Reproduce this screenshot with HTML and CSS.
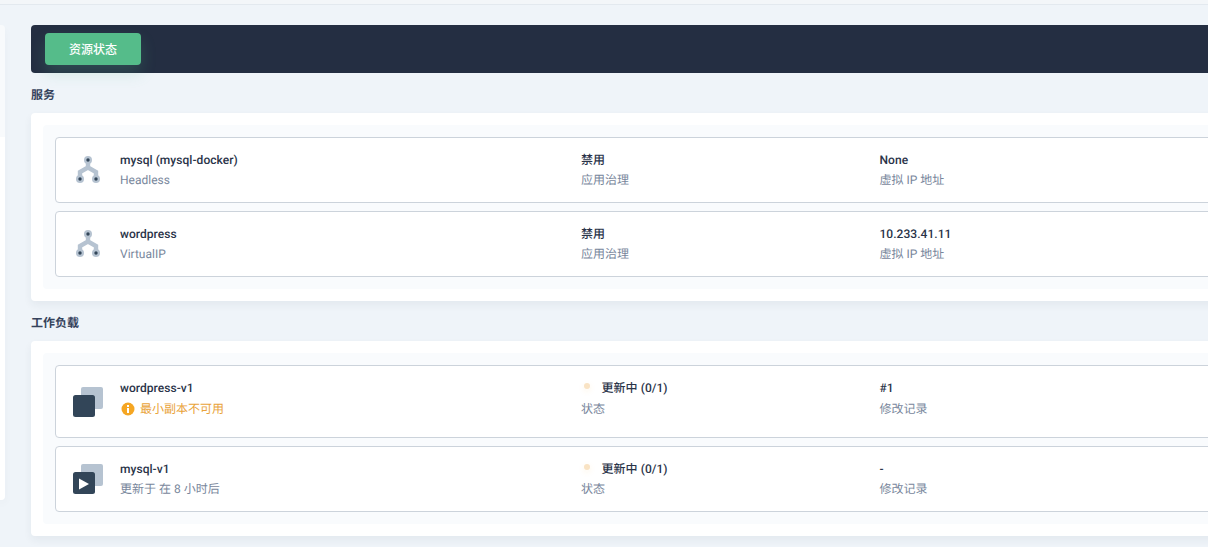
FILE: index.html
```html
<!DOCTYPE html>
<html lang="zh">
<head>
<meta charset="utf-8">
<title>资源状态</title>
<link rel="stylesheet" href="styles.css">
</head>
<body>
<div class="topbar"></div>
<div class="layout">
  <aside class="side">
    <div class="side-top"></div>
    <div class="side-bottom"></div>
  </aside>
  <main class="main">
    <div class="tabbar"><button class="tab">资源状态</button></div>

    <h2 class="heading">服务</h2>
    <section class="card">
      <div class="inner">
        <div class="row">
          <div class="icon-cell">
            <svg class="svc" width="24" height="28" viewBox="0 0 24 28"><path d="M12 4V11.5L4 16V23M12 11.5L20 16V23" fill="none" stroke="#b6c3d1" stroke-width="4.4"/><circle cx="12" cy="4" r="4" fill="#b6c3d1"/><circle cx="4" cy="23" r="4" fill="#b6c3d1"/><circle cx="20" cy="23" r="4" fill="#b6c3d1"/><circle cx="12" cy="4" r="1.7" fill="#324558"/><circle cx="4" cy="23" r="1.7" fill="#324558"/><circle cx="20" cy="23" r="1.7" fill="#324558"/></svg>
          </div>
          <div class="col col-name"><div class="title">mysql (mysql-docker)</div><div class="sub">Headless</div></div>
          <div class="col col-mid"><div class="title">禁用</div><div class="sub">应用治理</div></div>
          <div class="col"><div class="title">None</div><div class="sub">虚拟 IP 地址</div></div>
        </div>
        <div class="row">
          <div class="icon-cell">
            <svg class="svc" width="24" height="28" viewBox="0 0 24 28"><path d="M12 4V11.5L4 16V23M12 11.5L20 16V23" fill="none" stroke="#b6c3d1" stroke-width="4.4"/><circle cx="12" cy="4" r="4" fill="#b6c3d1"/><circle cx="4" cy="23" r="4" fill="#b6c3d1"/><circle cx="20" cy="23" r="4" fill="#b6c3d1"/><circle cx="12" cy="4" r="1.7" fill="#324558"/><circle cx="4" cy="23" r="1.7" fill="#324558"/><circle cx="20" cy="23" r="1.7" fill="#324558"/></svg>
          </div>
          <div class="col col-name"><div class="title">wordpress</div><div class="sub">VirtualIP</div></div>
          <div class="col col-mid"><div class="title">禁用</div><div class="sub">应用治理</div></div>
          <div class="col"><div class="title">10.233.41.11</div><div class="sub">虚拟 IP 地址</div></div>
        </div>
      </div>
    </section>

    <h2 class="heading">工作负载</h2>
    <section class="card">
      <div class="inner">
        <div class="row row-warn">
          <div class="icon-cell">
            <svg class="stack" width="32" height="32" viewBox="0 0 32 32"><rect x="9" y="1" width="22" height="22" rx="2" fill="#b6c3d1"/><rect x="1" y="9" width="22" height="22" rx="2.5" fill="#324558"/></svg>
          </div>
          <div class="col col-name"><div class="title">wordpress-v1</div>
            <div class="warn"><svg width="14" height="14" viewBox="0 0 14 14"><circle cx="7" cy="7" r="6.5" fill="#f5a623"/><rect x="6" y="6" width="2" height="5" fill="#fff"/><rect x="6" y="3" width="2" height="2" fill="#fff"/></svg><span>最小副本不可用</span></div>
          </div>
          <div class="col col-mid"><div class="title status"><i class="dot"></i>更新中 (0/1)</div><div class="sub">状态</div></div>
          <div class="col"><div class="title">#1</div><div class="sub">修改记录</div></div>
        </div>
        <div class="row">
          <div class="icon-cell">
            <svg class="stack" width="32" height="32" viewBox="0 0 32 32"><rect x="9" y="1" width="22" height="22" rx="2" fill="#b6c3d1"/><rect x="1" y="9" width="22" height="22" rx="2.5" fill="#324558"/><path d="M7 15.5L17 21L7 26.5Z" fill="#fff"/></svg>
          </div>
          <div class="col col-name"><div class="title">mysql-v1</div><div class="sub">更新于 在 8 小时后</div></div>
          <div class="col col-mid"><div class="title status"><i class="dot"></i>更新中 (0/1)</div><div class="sub">状态</div></div>
          <div class="col"><div class="title">-</div><div class="sub">修改记录</div></div>
        </div>
      </div>
    </section>
  </main>
</div>
</body>
</html>
```

FILE: styles.css
```css
* { box-sizing: border-box; }
html, body { margin: 0; height: 547px; overflow: hidden; }
body {
  background: #eff4f9;
  font-family: Roboto, "Noto Sans CJK SC", sans-serif;
  font-size: 12px;
  line-height: 20px;
  color: #242e42;
  text-rendering: geometricPrecision;
}
.topbar { height: 5px; background: #f3f6f9; border-bottom: 1px solid #e3e9ef; }
.layout { display: flex; gap: 26px; padding-top: 20px; width: 1500px; }
.side { width: 5px; height: 475px; flex: none; display: flex; flex-direction: column; border-radius: 0 4px 4px 0; overflow: hidden; box-shadow: 0 4px 8px rgba(36,46,66,.04); }
.side-top { height: 112px; background: #f8fafc; }
.side-bottom { flex: 1; background: #fff; }
.main { width: 1400px; flex: none; }
.tabbar { height: 48px; padding: 8px 14px; background: #242e42; border-radius: 4px 0 0 4px; }
.tab {
  display: block; width: 96px; height: 32px; padding: 2px 0 0; border: 0; border-radius: 4px;
  background: #55bc8a; color: #fff; font: inherit; font-weight: 500;
  box-shadow: 0 8px 16px rgba(85,188,138,.2);
}
.heading { margin: 12px 0 8px; font-size: 12px; line-height: 20px; font-weight: 700; color: #36435c; }
.card { background: #fff; padding: 12px; border-radius: 4px; box-shadow: 0 4px 8px rgba(36,46,66,.06); }
.inner { background: #f9fbfd; padding: 12px; border-radius: 4px; display: flex; flex-direction: column; gap: 8px; }
.row {
  display: flex; height: 66px; padding-top: 12px; background: #fff;
  border: 1px solid #ccd3db; border-radius: 4px;
}
.row-warn { height: 73px; }
.icon-cell { width: 64px; flex: none; padding-left: 16px; padding-top: 4px; display: flex; align-items: flex-start; }
.row-warn .icon-cell { padding-top: 8px; }
.svc { margin: 2px 0 0 4px; }
.col-name { width: 461px; flex: none; }
.col-mid { width: 298.5px; flex: none; }
.title { font-weight: 500; color: #2a3449; white-space: nowrap; letter-spacing: .05px; }
.sub { color: #79879c; white-space: nowrap; }
.row-warn .sub { margin-top: 1px; }
.warn { display: flex; align-items: center; gap: 5px; height: 22px; color: #e9a33a; margin-left: 1px; }
.warn svg { flex: none; }
.status { display: flex; align-items: center; padding-left: 20.5px; position: relative; }
.dot { position: absolute; left: 3px; top: 5px; width: 6px; height: 6px; border-radius: 50%; background: #f9e3c4; box-shadow: 0 2px 6px rgba(245,166,35,.12); }
```
